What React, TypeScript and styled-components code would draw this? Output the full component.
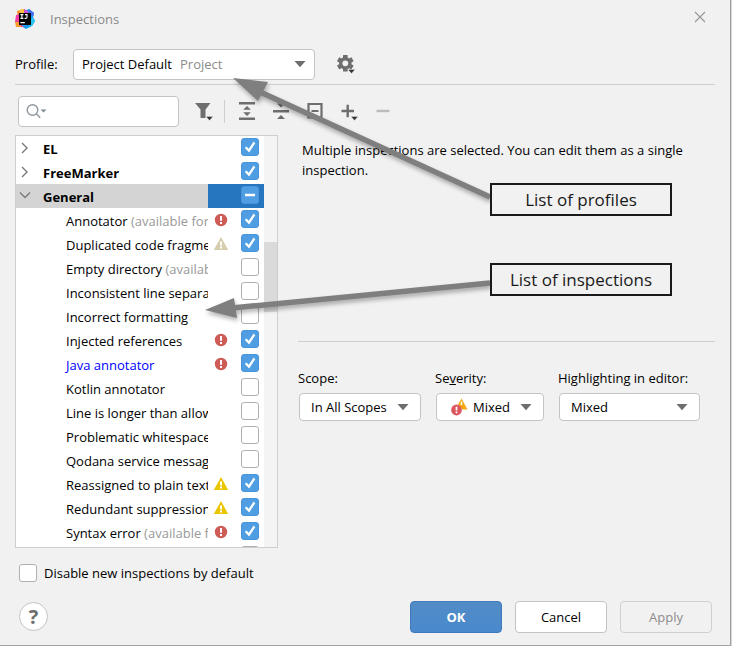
import React, { useEffect, useRef, useState } from "react";
import styled, { createGlobalStyle, css } from "styled-components";

const GlobalStyle = createGlobalStyle`
  * { box-sizing: border-box; }
  body { margin: 0; background: #d6d6d6; }
  body, button, input, select {
    font-family: "Open Sans", "Noto Sans", sans-serif;
    font-size: 13px;
    line-height: 20px;
    color: #000;
  }
`;

const Dialog = styled.main`
  position: relative;
  display: flex;
  flex-direction: column;
  height: 100vh;
  min-height: 480px;
  margin-right: 1px;
  padding: 0 15px;
  background: #f1f1f1;
  border-right: 1px solid #9f9f9f;
  border-bottom: 1px solid #a3a3a3;
`;

const TitleBar = styled.header`
  display: flex;
  align-items: center;
  gap: 15px;
  height: 38px;
`;

const Title = styled.h1`
  flex: 1;
  margin: 0;
  font-size: 13px;
  font-weight: 400;
  color: #8a8a8a;
`;

const IconButton = styled.button`
  display: flex;
  align-items: center;
  justify-content: center;
  width: 24px;
  height: 24px;
  padding: 0;
  border: 0;
  background: none;
`;

const CloseButton = styled(IconButton)`
  margin: 0 3px 4px 0;
`;

const ProfileBar = styled.div`
  display: flex;
  align-items: center;
  height: 47px;
  padding-top: 6px;
  border-bottom: 1px solid #cecece;
`;

const ProfileLabel = styled.label`
  width: 58px;
`;

const SelectBox = styled.div<{ $width: number }>`
  display: grid;
  grid-template-columns: minmax(0, 1fr);
  align-items: center;
  width: ${(p) => p.$width}px;

  > * {
    grid-area: 1 / 1;
  }
`;

const Select = styled.select<{ $height: number; $indent: number; $covered?: boolean }>`
  width: 100%;
  height: ${(p) => p.$height}px;
  padding: 0 24px 0 ${(p) => p.$indent}px;
  appearance: none;
  border: 1px solid #c4c4c4;
  border-radius: 4px;
  background: #fff;
  color: ${(p) => (p.$covered ? "transparent" : "#000")};

  option {
    color: #000;
  }
`;

const SelectValue = styled.span`
  display: flex;
  gap: 8px;
  padding-left: 9px;
  pointer-events: none;
`;

const Muted = styled.span`
  color: #8c8c8c;
`;

const Note = styled.span`
  color: #999;
`;

const SelectArrow = styled.svg<{ $inset: number }>`
  justify-self: end;
  margin-right: ${(p) => p.$inset}px;
  pointer-events: none;
`;

const SelectIcon = styled.svg`
  margin-left: 14px;
  pointer-events: none;
`;

const GearButton = styled(IconButton)`
  margin-left: 19px;
`;

const Toolbar = styled.div`
  display: flex;
  align-items: center;
  height: 50px;
  padding: 2px 0 0 3px;
`;

const SearchBox = styled.label`
  display: flex;
  align-items: center;
  width: 161px;
  height: 31px;
  padding-left: 7px;
  border: 1px solid #c4c4c4;
  border-radius: 4px;
  background: #fff;
`;

const SearchInput = styled.input`
  flex: 1;
  min-width: 0;
  border: 0;
  outline: 0;
  background: none;
`;

const ToolGroup = styled.div`
  display: flex;
  gap: 10px;
  margin-left: 10px;
`;

const FilterButton = styled(IconButton)`
  margin-left: 13px;
`;

const ToolSeparator = styled.span`
  width: 1px;
  height: 23px;
  margin-left: 8px;
  background: #cecece;
`;

const Content = styled.div`
  display: flex;
  flex: 1;
  gap: 20px;
  min-height: 0;
`;

const TreePanel = styled.section`
  display: flex;
  width: 263px;
  border: 1px solid #cecece;
  background: #fff;
`;

const Tree = styled.ul`
  flex: 1;
  min-width: 0;
  margin: 0;
  padding: 0;
  overflow: hidden;
  list-style: none;
`;

const TreeRow = styled.li<{ $selected?: boolean }>`
  display: grid;
  grid-template-columns: minmax(0, 1fr) 28px 28px;
  align-items: center;
  height: 24px;
  background: ${(p) =>
    p.$selected ? "linear-gradient(to left, #2675bf 56px, #d4d4d4 56px)" : "#fff"};
`;

const NameCell = styled.div`
  display: flex;
  align-items: center;
  overflow: hidden;
  white-space: nowrap;
`;

const Expander = styled.button`
  display: flex;
  flex: none;
  width: 27px;
  padding: 0 0 0 3px;
  border: 0;
  background: none;
`;

const GroupLabel = styled.label`
  font-weight: 700;
  padding-top: 2px;
`;

const ItemLabel = styled.label<{ $changed?: boolean }>`
  padding: 2px 0 0 50px;
  color: ${(p) => (p.$changed ? "#0000ff" : "#000")};
`;

const SeverityCell = styled.span`
  display: flex;
  padding-left: 5px;
`;

const ScrollTrack = styled.div`
  display: grid;
  grid-template-rows: 106fr 70fr 235fr;
  width: 13px;
  background: #f4f4f4;
`;

const ScrollThumb = styled.div`
  grid-row: 2;
  background: #dadada;
`;

const mark = (d: string) =>
  `url("data:image/svg+xml,${encodeURIComponent(
    `<svg xmlns='http://www.w3.org/2000/svg' viewBox='0 0 16 16'><path d='${d}' fill='none' stroke='white' stroke-width='2.3'/></svg>`
  )}")`;

const filledBox = css`
  border-color: #4b93da;
  background-color: #4f9ee3;
`;

const CheckBox = styled.input`
  width: 18px;
  height: 18px;
  margin: 0;
  appearance: none;
  border: 1px solid #b0b0b0;
  border-radius: 3px;
  background: #fff center / 16px 16px no-repeat;

  &:checked {
    ${filledBox}
    background-image: ${mark("M3.6 8.2 L7 11.6 L12.4 3.4")};
  }

  &:indeterminate {
    ${filledBox}
    background-image: ${mark("M3 8 H13")};
  }
`;

const RowCheck = styled(CheckBox)`
  margin: 0 0 2px 5px;
`;

const Details = styled.section`
  display: flex;
  flex: 1;
  flex-direction: column;
  min-width: 0;
`;

const Message = styled.p`
  height: 207px;
  margin: 0;
  padding: 5px 4px 0;
  border-bottom: 1px solid #cecece;
`;

const Options = styled.div`
  display: flex;
  gap: 14px;
  padding-top: 26px;
`;

const Field = styled.div`
  display: flex;
  flex-direction: column;
  gap: 5px;
`;

const FieldLabel = styled.label`
  white-space: nowrap;
`;

const FieldSelect = styled(SelectBox)`
  margin-left: 1px;
`;

const DefaultOption = styled.label`
  display: flex;
  align-items: center;
  gap: 7px;
  height: 50px;
  padding-left: 4px;
`;

const Footer = styled.footer`
  display: flex;
  align-items: center;
  gap: 13px;
  height: 47px;
  padding: 0 3px 10px 4px;
`;

const HelpButton = styled.button`
  width: 29px;
  height: 29px;
  margin-right: auto;
  padding: 0;
  border: 1px solid #c4c4c4;
  border-radius: 50%;
  background: #fff;
  color: #6e6e6e;
  font-size: 20px;
  font-weight: 700;
`;

const ActionButton = styled.button<{ $primary?: boolean }>`
  width: 92px;
  height: 32px;
  border: 1px solid #c4c4c4;
  border-radius: 4px;
  background: #fff;

  &:disabled {
    border-color: #d0d0d0;
    background: none;
    color: #8c8c8c;
  }

  ${(p) =>
    p.$primary &&
    css`
      border-color: #3f78bb;
      background: linear-gradient(#528cc7, #4989cc);
      color: #fff;
      font-weight: 700;
    `}
`;

const Annotations = styled.div`
  position: absolute;
  inset: 0;
  pointer-events: none;
`;

const Arrows = styled.svg`
  position: absolute;
  top: 0;
  left: 0;
  filter: drop-shadow(1px 3px 2px rgba(0, 0, 0, 0.3));
`;

const Callout = styled.div<{ $top: number }>`
  position: absolute;
  top: ${(p) => p.$top}px;
  left: 490px;
  display: flex;
  align-items: center;
  justify-content: center;
  width: 182px;
  height: 33px;
  border: 2px solid #1a1a1a;
  background: #f1f1f1;
  font-size: 17px;
  color: #1a1a1a;
`;

const AppLogo = () => (
  <svg width="20" height="20" viewBox="0 0 20 20" aria-hidden="true">
    <path d="M9 2 L14 0 L19 4 L18 8 L20 12 L17 17 L11 20 L6 17 L6 4 Z" fill="#169df2" />
    <path d="M14 0 L19 4 L18 8 L14 4 Z" fill="#4a6cf0" />
    <path d="M17 8 L20 12 L17 17 L14 17 Z" fill="#27c6f4" />
    <path d="M2 2 L9 0 L12 3 L10 7 L3 9 Z" fill="#f98a2b" />
    <path d="M4 1 L9 0 L9 4 L5 5 Z" fill="#fcc33c" />
    <path d="M9 0 L13 2 L14 5 L9 5 Z" fill="#c852cf" />
    <path d="M1 6 L6 5 L7 17 L10 18 L5 18 L0 13 Z" fill="#f43da0" />
    <path d="M0 13 L4 13 L6 18 L1 18 Z" fill="#fb9b2e" />
    <rect x="4" y="4" width="12" height="12" fill="#050505" />
    <path
      d="M5.4 5.6 H8.4 M6.9 5.6 V9.4 M5.4 9.4 H8.4 M10 5.6 H12 V8.2 Q12 9.4 10.8 9.4 H9.6 M5.4 13.6 H9.8"
      stroke="#fff"
      strokeWidth="1.1"
      fill="none"
    />
  </svg>
);

const CloseIcon = () => (
  <svg width="12" height="12" aria-hidden="true">
    <path d="M1 1 L11 11 M11 1 L1 11" stroke="#969696" strokeWidth="1.1" />
  </svg>
);

const DropMark = () => (
  <path d="M13 16.5 H20 L16.5 20.5 Z" fill="#333" stroke="#f1f1f1" strokeWidth="0.4" />
);

const GearIcon = () => (
  <svg width="22" height="22" viewBox="0 0 22 22" aria-hidden="true">
    {[0, 60, 120].map((a) => (
      <rect key={a} x="8" y="2" width="4.6" height="16.6" rx="0.5" fill="#6e6e6e" transform={`rotate(${a} 10.3 10.3)`} />
    ))}
    <circle cx="10.3" cy="10.3" r="6.2" fill="#6e6e6e" />
    <circle cx="10.3" cy="10.3" r="2.9" fill="#f1f1f1" />
    <DropMark />
  </svg>
);

const SearchIcon = () => (
  <svg width="22" height="18" viewBox="0 0 22 18" fill="none" aria-hidden="true">
    <circle cx="6.5" cy="8" r="5.3" stroke="#8f979e" strokeWidth="1.4" />
    <path d="M10.3 11.8 L14.2 15.8" stroke="#8f979e" strokeWidth="1.4" />
    <path d="M14.5 7.5 H20.5 L17.5 10.5 Z" fill="#7f8b91" />
  </svg>
);

const FilterIcon = () => (
  <svg width="22" height="22" viewBox="0 0 22 22" aria-hidden="true">
    <path d="M2 3 H17.5 L12.5 9.5 V18 H7.5 V9.5 Z" fill="#6e6e6e" />
    <DropMark />
  </svg>
);

const ExpandIcon = () => (
  <svg width="18" height="20" viewBox="0 0 18 20" fill="#6e6e6e" aria-hidden="true">
    <path d="M1 1 H17 V3.5 H1 Z M1 16.5 H17 V19 H1 Z M9 5 L12.8 8.8 H5.2 Z M9 15 L12.8 11.2 H5.2 Z" />
  </svg>
);

const CollapseIcon = () => (
  <svg width="18" height="20" viewBox="0 0 18 20" fill="#6e6e6e" aria-hidden="true">
    <path d="M1 9 H17 V11.5 H1 Z M5 2.5 H13 L9 6.5 Z M5 18 H13 L9 14 Z" />
  </svg>
);

const CollapseBoxIcon = () => (
  <svg width="18" height="20" viewBox="0 0 18 20" fill="none" stroke="#6e6e6e" strokeWidth="2.2" aria-hidden="true">
    <path d="M2.5 3 H15.5 V16.5 H2.5 Z M5.5 10 H12.5" />
  </svg>
);

const PlusIcon = () => (
  <svg width="22" height="22" viewBox="0 0 22 22" aria-hidden="true">
    <path d="M3.5 11 H16 M9.7 4.8 V17.2" stroke="#6e6e6e" strokeWidth="2.4" />
    <DropMark />
  </svg>
);

const MinusIcon = () => (
  <svg width="18" height="20" viewBox="0 0 18 20" aria-hidden="true">
    <path d="M2.5 10 H15.5" stroke="#bcbcbc" strokeWidth="2.4" />
  </svg>
);

const Chevron = ({ open }: { open?: boolean }) => (
  <svg width="12" height="12" viewBox="0 0 12 12" fill="none" stroke="#7a7a7a" strokeWidth="1.4" aria-hidden="true">
    <path d={open ? "M1 2.5 L6 7.5 L11 2.5" : "M3 1 L8 6 L3 11"} />
  </svg>
);

type Severity = "error" | "warning" | "weak";

const SeverityIcon = ({ kind }: { kind: Severity }) => (
  <svg width="16" height="16" viewBox="0 0 16 16" role="img" aria-label={kind}>
    {kind === "error" ? (
      <circle cx="8" cy="8" r="6.2" fill="#cf5b56" />
    ) : (
      <path d="M8 1 L15.2 14 H0.8 Z" fill={kind === "warning" ? "#e9c600" : "#d5cdae"} />
    )}
    <path
      d={kind === "error" ? "M8 4 V8.8 M8 10 V12" : "M8 5.4 V9.6 M8 10.6 V12.6"}
      stroke="#fff"
      strokeWidth="2"
    />
  </svg>
);

const DownArrow = ({ inset = 12 }: { inset?: number }) => (
  <SelectArrow $inset={inset} width="12" height="8" viewBox="0 0 12 8" aria-hidden="true">
    <path d="M0.5 1 H11.5 L6 7.2 Z" fill="#6e6e6e" />
  </SelectArrow>
);

interface Inspection {
  name: string;
  note?: string;
  severity?: Severity;
  on?: boolean;
  changed?: boolean;
}

const groups = ["EL", "FreeMarker"];

const inspections: Inspection[] = [
  { name: "Annotator", note: "(available for", severity: "error", on: true },
  { name: "Duplicated code fragment", severity: "weak", on: true },
  { name: "Empty directory", note: "(available" },
  { name: "Inconsistent line separators" },
  { name: "Incorrect formatting" },
  { name: "Injected references", severity: "error", on: true },
  { name: "Java annotator", severity: "error", on: true, changed: true },
  { name: "Kotlin annotator" },
  { name: "Line is longer than allowed" },
  { name: "Problematic whitespace" },
  { name: "Qodana service message" },
  { name: "Reassigned to plain text", severity: "warning", on: true },
  { name: "Redundant suppression", severity: "warning", on: true },
  { name: "Syntax error", note: "(available for", severity: "error", on: true },
];

const GroupRow = ({ name, open }: { name: string; open?: boolean }) => {
  const box = useRef<HTMLInputElement>(null);
  useEffect(() => {
    if (box.current) box.current.indeterminate = !!open;
  }, [open]);
  return (
    <TreeRow $selected={open}>
      <NameCell>
        <Expander aria-label={`Toggle ${name}`} aria-expanded={!!open}>
          <Chevron open={open} />
        </Expander>
        <GroupLabel htmlFor={`group-${name}`}>{name}</GroupLabel>
      </NameCell>
      <span />
      <RowCheck ref={box} type="checkbox" id={`group-${name}`} defaultChecked={!open} />
    </TreeRow>
  );
};

const InspectionRow = ({ item, id }: { item: Inspection; id: string }) => {
  const [on, setOn] = useState(!!item.on);
  return (
    <TreeRow>
      <NameCell>
        <ItemLabel htmlFor={id} $changed={item.changed}>
          {item.name} {item.note && <Note>{item.note}</Note>}
        </ItemLabel>
      </NameCell>
      <SeverityCell>{item.severity && <SeverityIcon kind={item.severity} />}</SeverityCell>
      <RowCheck type="checkbox" id={id} checked={on} onChange={() => setOn(!on)} />
    </TreeRow>
  );
};

export default function App() {
  return (
    <>
      <GlobalStyle />
      <Dialog>
        <TitleBar>
          <AppLogo />
          <Title>Inspections</Title>
          <CloseButton aria-label="Close"><CloseIcon /></CloseButton>
        </TitleBar>

        <ProfileBar>
          <ProfileLabel htmlFor="profile">Profile:</ProfileLabel>
          <SelectBox $width={242}>
            <Select id="profile" $height={31} $indent={9} $covered>
              <option>Project Default</option>
            </Select>
            <SelectValue aria-hidden="true">
              <span>Project Default</span>
              <Muted>Project</Muted>
            </SelectValue>
            <DownArrow inset={9} />
          </SelectBox>
          <GearButton aria-label="Profile actions"><GearIcon /></GearButton>
        </ProfileBar>

        <Toolbar>
          <SearchBox>
            <SearchIcon />
            <SearchInput type="text" aria-label="Search inspections" />
          </SearchBox>
          <FilterButton aria-label="Filter"><FilterIcon /></FilterButton>
          <ToolSeparator />
          <ToolGroup>
            <IconButton aria-label="Expand all"><ExpandIcon /></IconButton>
            <IconButton aria-label="Collapse all"><CollapseIcon /></IconButton>
            <IconButton aria-label="Reset to empty"><CollapseBoxIcon /></IconButton>
            <IconButton aria-label="Add"><PlusIcon /></IconButton>
            <IconButton aria-label="Remove" disabled><MinusIcon /></IconButton>
          </ToolGroup>
        </Toolbar>

        <Content>
          <TreePanel aria-label="Inspections">
            <Tree>
              {groups.map((name) => <GroupRow key={name} name={name} />)}
              <GroupRow name="General" open />
              {inspections.map((item, i) => (
                <InspectionRow key={item.name} item={item} id={`inspection-${i}`} />
              ))}
              <TreeRow>
                <span />
                <span />
                <RowCheck type="checkbox" aria-label="Next inspection" />
              </TreeRow>
            </Tree>
            <ScrollTrack><ScrollThumb /></ScrollTrack>
          </TreePanel>

          <Details>
            <Message>
              Multiple inspections are selected. You can edit them as a single inspection.
            </Message>
            <Options>
              <Field>
                <FieldLabel htmlFor="scope">Scope:</FieldLabel>
                <FieldSelect $width={122}>
                  <Select id="scope" $height={28} $indent={11}><option>In All Scopes</option></Select>
                  <DownArrow />
                </FieldSelect>
              </Field>
              <Field>
                <FieldLabel htmlFor="severity">Se<u>v</u>erity:</FieldLabel>
                <FieldSelect $width={108}>
                  <Select id="severity" $height={28} $indent={36}><option>Mixed</option></Select>
                  <SelectIcon width="18" height="18" viewBox="0 0 18 18" aria-hidden="true">
                    <path d="M11.5 0.5 L17.5 11.5 H12.5 L8 6.5 Z" fill="#f4a912" />
                    <path d="M11.5 3.5 V7" stroke="#fff" strokeWidth="1.5" />
                    <circle cx="6.5" cy="12" r="5.4" fill="#db5860" />
                    <path d="M6.5 8.8 V12.5 M6.5 13.5 V15.3" stroke="#fff" strokeWidth="1.7" />
                  </SelectIcon>
                  <DownArrow />
                </FieldSelect>
              </Field>
              <Field>
                <FieldLabel htmlFor="highlighting">Highlighting in editor:</FieldLabel>
                <FieldSelect $width={141}>
                  <Select id="highlighting" $height={28} $indent={11}><option>Mixed</option></Select>
                  <DownArrow />
                </FieldSelect>
              </Field>
            </Options>
          </Details>
        </Content>

        <DefaultOption>
          <CheckBox type="checkbox" />
          Disable new inspections by default
        </DefaultOption>

        <Footer>
          <HelpButton aria-label="Help">?</HelpButton>
          <ActionButton $primary>OK</ActionButton>
          <ActionButton>Cancel</ActionButton>
          <ActionButton disabled>Apply</ActionButton>
        </Footer>

        <Annotations>
          <Arrows width="500" height="330" viewBox="0 0 500 330" aria-hidden="true">
            <path d="M490 197 L258 91" stroke="#7f7f7f" strokeWidth="5.5" />
            <path d="M233 78 L268 82 L258 101 Z" fill="#7f7f7f" />
            <path d="M490 283 L232 308" stroke="#7f7f7f" strokeWidth="5.5" />
            <path d="M205 310 L234 298 L237 318 Z" fill="#7f7f7f" />
          </Arrows>
          <Callout $top={183}>List of profiles</Callout>
          <Callout $top={263}>List of inspections</Callout>
        </Annotations>
      </Dialog>
    </>
  );
}
